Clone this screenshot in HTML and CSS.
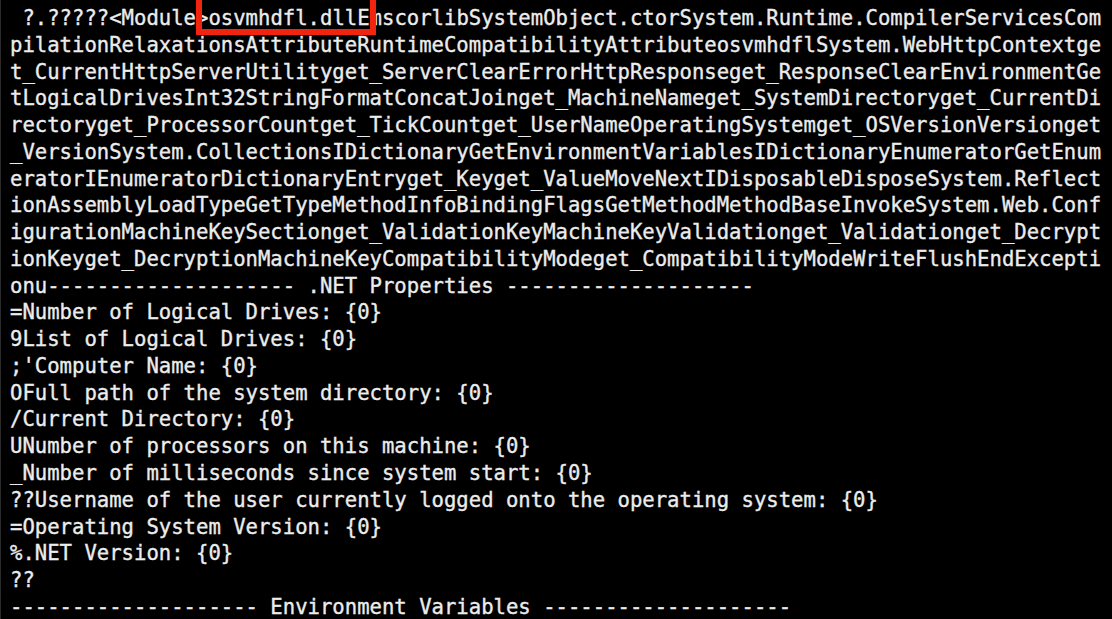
FILE: index.html
```html
<!DOCTYPE html>
<html lang="en">
<head>
<meta charset="utf-8">
<title>Terminal output</title>
<link rel="stylesheet" href="styles.css">
</head>
<body>
<main class="terminal">
<pre class="output"> ?.?????&lt;Module&gt;<span class="mark">osvmhdfl.dll</span>EmscorlibSystemObject.ctorSystem.Runtime.CompilerServicesCom
pilationRelaxationsAttributeRuntimeCompatibilityAttributeosvmhdflSystem.WebHttpContextge
t_CurrentHttpServerUtilityget_ServerClearErrorHttpResponseget_ResponseClearEnvironmentGe
tLogicalDrivesInt32StringFormatConcatJoinget_MachineNameget_SystemDirectoryget_CurrentDi
rectoryget_ProcessorCountget_TickCountget_UserNameOperatingSystemget_OSVersionVersionget
_VersionSystem.CollectionsIDictionaryGetEnvironmentVariablesIDictionaryEnumeratorGetEnum
eratorIEnumeratorDictionaryEntryget_Keyget_ValueMoveNextIDisposableDisposeSystem.Reflect
ionAssemblyLoadTypeGetTypeMethodInfoBindingFlagsGetMethodMethodBaseInvokeSystem.Web.Conf
igurationMachineKeySectionget_ValidationKeyMachineKeyValidationget_Validationget_Decrypt
ionKeyget_DecryptionMachineKeyCompatibilityModeget_CompatibilityModeWriteFlushEndExcepti
onu-------------------- .NET Properties --------------------
=Number of Logical Drives: {0}
9List of Logical Drives: {0}
;'Computer Name: {0}
OFull path of the system directory: {0}
/Current Directory: {0}
UNumber of processors on this machine: {0}
_Number of milliseconds since system start: {0}
??Username of the user currently logged onto the operating system: {0}
=Operating System Version: {0}
%.NET Version: {0}
??
-------------------- Environment Variables --------------------</pre>
</main>
</body>
</html>
```
FILE: styles.css
```css
html, body {
  margin: 0;
  padding: 0;
  background: #000;
}

.terminal {
  height: 619px;
  overflow: hidden;
  padding: 5px 0 0 9px;
  box-sizing: border-box;
  border-left: 1px solid #2a2a2a;
}

.output {
  margin: 0;
  font-family: "DejaVu Sans Mono", "Liberation Mono", monospace;
  font-size: 20.6px;
  line-height: 26.76px;
  color: #ececec;
  white-space: pre;
  -webkit-text-stroke: 0.35px #ececec;
}

.mark {
  position: relative;
}

.mark::before {
  content: "";
  position: absolute;
  left: -12px;
  right: -19px;
  top: -12px;
  bottom: -5px;
  border: 6px solid #f0240f;
  pointer-events: none;
}
```
